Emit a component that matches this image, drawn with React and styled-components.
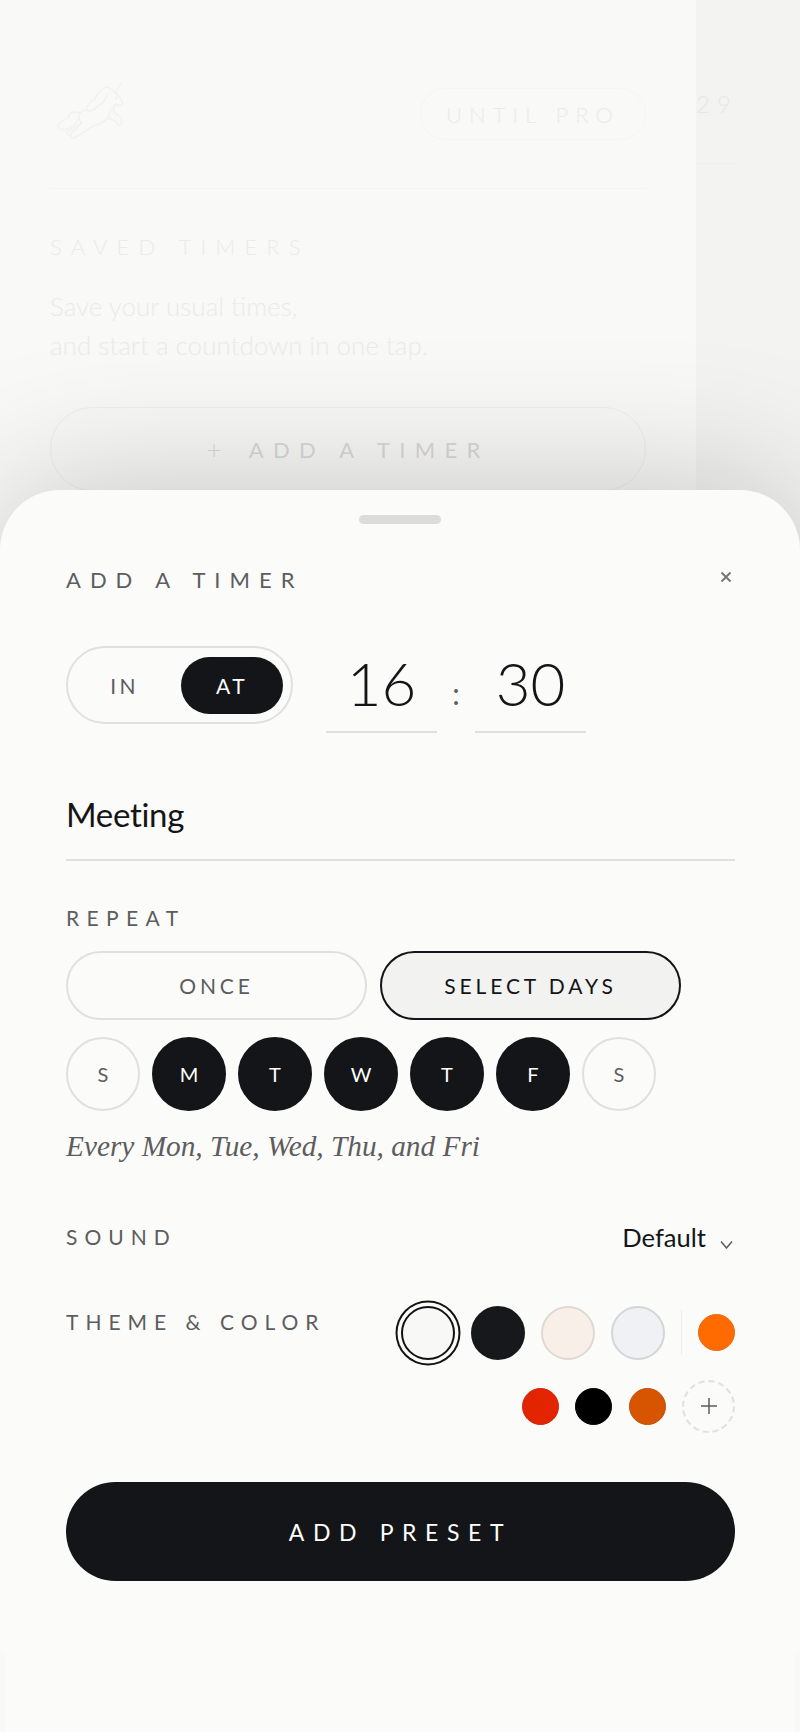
import React from "react";
import styled, { createGlobalStyle } from "styled-components";

const INK = "#141518";
const LINE = "#e0e0de";
const MUTED = "#5d5d5f";
const SHEET = "#fbfbf9";
const GHOST = "#ebebe9";

const GlobalStyle = createGlobalStyle`
    html, body {
        margin: 0;
        padding: 0;
        background: ${SHEET};
    }
    * {
        box-sizing: border-box;
    }
`;

const Unicorn = () => (
    <svg width="72" height="60" viewBox="0 0 72 60" fill="none" stroke="#f0f0ee" strokeWidth="1.2" strokeLinejoin="round" strokeLinecap="round">
        {/* head and horn */}
        <path d="M66 3 L60.5 13 C63 15 66 19 68 23 C67 26 63 26 60 24 L58 29 C59 33 61 35 64 36 C66 38 67 42 66 45 C64 46 62 45 62 42 C59 40 56 39 53 38" />
        {/* mane */}
        <path d="M60.5 13 C58 10 55 8 52 7 C46 9 42 13 40 19 C36 21 32 25 31 30 C35 32 39 30 42 27 C47 24 51 19 53 14" />
        {/* body and hind legs */}
        <path d="M31 30 C27 30 24 33 24 37 C24 40 25 42 27 43 C24 46 20 50 16 53 C15 56 17 58 19 58 C26 54 33 50 38 46 C44 45 49 42 53 38 L56 29" />
        <path d="M27 43 C22 45 17 48 12 52 C11 54 13 56 16 55" />
        {/* tail */}
        <path d="M24 33 C18 30 14 33 13 38 C8 39 4 43 3 47 C6 51 12 50 16 47 C19 45 22 42 24 38" />
        <circle cx="61" cy="18" r="0.7" />
    </svg>
);

const App = () => {
    return (
        <>
            <GlobalStyle />
            <Screen>
                <MainPanel>
                    <TopBar>
                        <Unicorn />
                        <ProPill>UNTIL PRO</ProPill>
                    </TopBar>
                    <Rule />
                    <SavedTitle>SAVED TIMERS</SavedTitle>
                    <SavedText>Save your usual times,<br />and start a countdown in one tap.</SavedText>
                    <AddTimer><span>+</span> ADD A TIMER</AddTimer>
                </MainPanel>
                <SidePanel>
                    <SideNumber>29</SideNumber>
                    <SideRule />
                </SidePanel>

                <Sheet>
                    <Handle />
                    <Header>
                        <Title>ADD A TIMER</Title>
                        <svg width="12" height="12" viewBox="0 0 12 12" stroke="#77777a" strokeWidth="2">
                            <path d="M1.5 1.5 L10.5 10.5 M10.5 1.5 L1.5 10.5" />
                        </svg>
                    </Header>

                    <TimeRow>
                        <Toggle>
                            <ToggleOption>IN</ToggleOption>
                            <ToggleOption $active>AT</ToggleOption>
                        </Toggle>
                        <TimeField>16</TimeField>
                        <Colon>:</Colon>
                        <TimeField>30</TimeField>
                    </TimeRow>

                    <NameField>Meeting</NameField>

                    <RepeatLabel>REPEAT</RepeatLabel>
                    <Segments>
                        <Segment>ONCE</Segment>
                        <Segment $active>SELECT DAYS</Segment>
                    </Segments>
                    <Days>
                        <Day>S</Day>
                        <Day $active>M</Day>
                        <Day $active>T</Day>
                        <Day $active>W</Day>
                        <Day $active>T</Day>
                        <Day $active>F</Day>
                        <Day>S</Day>
                    </Days>
                    <Summary>Every Mon, Tue, Wed, Thu, and Fri</Summary>

                    <SoundRow>
                        <Label>SOUND</Label>
                        <SoundValue>
                            Default
                            <svg width="13" height="9" viewBox="0 0 13 9" fill="none" stroke="#5d5d5f" strokeWidth="1.5">
                                <path d="M1 1.5 L6.5 8 L12 1.5" />
                            </svg>
                        </SoundValue>
                    </SoundRow>

                    <ThemeRow>
                        <ThemeLabel>THEME &amp; COLOR</ThemeLabel>
                        <Palette>
                            <SwatchRow $height={65} $gap={16}>
                                <Swatch $fill="#f8f8f7" $edge="#111214" $selected />
                                <Swatch $fill="#17181b" $edge="#17181b" />
                                <Swatch $fill="#f8efe8" $edge="#e0d8d2" />
                                <Swatch $fill="#f0f1f4" $edge="#d4d5d8" />
                                <PaletteDivider />
                                <Accent $fill="#ff6b00" $edge="#ea6a0c" />
                            </SwatchRow>
                            <SwatchRow $height={52} $gap={16.5}>
                                <Accent $fill="#e32400" $edge="#d0280a" />
                                <Accent $fill="#000000" $edge="#000000" />
                                <Accent $fill="#d75500" $edge="#c3500a" />
                                <AddColor>
                                    <svg width="18" height="18" viewBox="0 0 18 18" stroke="#5d5d5f" strokeWidth="1.5">
                                        <path d="M9 1 V17 M1 9 H17" />
                                    </svg>
                                </AddColor>
                            </SwatchRow>
                        </Palette>
                    </ThemeRow>

                    <PrimaryButton>ADD PRESET</PrimaryButton>
                </Sheet>
            </Screen>
        </>
    );
};

const Screen = styled.div`
    position: relative;
    display: flex;
    width: 800px;
    height: 1732px;
    overflow: hidden;
    font-family: "Lato", "Liberation Sans", sans-serif;
    color: ${INK};
`;

const MainPanel = styled.div`
    width: 696px;
    padding: 80px 50px 0;
    background: #f9f9f7;
    color: ${GHOST};
`;

const TopBar = styled.div`
    display: flex;
    justify-content: space-between;
    align-items: flex-end;
    height: 60px;
    padding-left: 5px;
`;

const ProPill = styled.div`
    width: 226px;
    height: 52px;
    border: 1px solid #f5f5f3;
    border-radius: 26px;
    display: flex;
    align-items: center;
    justify-content: center;
    font-size: 22px;
    font-weight: 300;
    letter-spacing: 7px;
`;

const Rule = styled.div`
    height: 1px;
    margin-top: 48px;
    background: #f4f4f2;
`;

const SavedTitle = styled.div`
    margin-top: 45px;
    font-size: 22px;
    font-weight: 300;
    letter-spacing: 9.1px;
    line-height: 26px;
`;

const SavedText = styled.div`
    margin-top: 27px;
    font-size: 26px;
    font-weight: 300;
    line-height: 39px;
`;

const AddTimer = styled.div`
    margin-top: 42px;
    height: 84px;
    border: 1px solid #efefed;
    border-radius: 45px;
    display: flex;
    align-items: center;
    justify-content: center;
    font-size: 22px;
    letter-spacing: 9.3px;
    color: #d9d9d7;
    span {
        font-size: 26px;
        font-weight: 300;
        margin-right: 18px;
    }
`;

const SidePanel = styled.div`
    flex: 1;
    background: #f3f3f2;
    color: #e7e7e5;
`;

const SideNumber = styled.div`
    margin-top: 92px;
    font-size: 24px;
    font-weight: 300;
    letter-spacing: 7px;
    line-height: 24px;
`;

const SideRule = styled.div`
    width: 40px;
    height: 1px;
    margin-top: 47px;
    background: #efefee;
`;

const Sheet = styled.div`
    position: absolute;
    top: 490px;
    left: 0;
    right: 0;
    bottom: 0;
    padding: 25px 65px 0 66px;
    background: ${SHEET};
    border-radius: 60px 60px 0 0;
    box-shadow: 0 0 150px rgba(0, 0, 0, 0.22);
    &::after {
        content: "";
        position: absolute;
        top: 1160px;
        left: 0;
        right: 0;
        bottom: 0;
        border-left: 5px solid #f9f9f7;
        border-right: 5px solid #f9f9f7;
    }
`;

const Handle = styled.div`
    width: 82px;
    height: 9px;
    margin-left: 293px;
    border-radius: 5px;
    background: #dcdcdb;
`;

const Header = styled.div`
    display: flex;
    justify-content: space-between;
    align-items: center;
    height: 30px;
    margin-top: 40px;
    padding-right: 3px;
    svg {
        margin-top: -4px;
    }
`;

const Title = styled.div`
    font-size: 22px;
    letter-spacing: 9px;
    color: ${MUTED};
`;

const TimeRow = styled.div`
    display: flex;
    align-items: flex-start;
    margin-top: 52px;
`;

const Toggle = styled.div`
    display: flex;
    align-items: center;
    width: 227px;
    height: 78px;
    padding-right: 8px;
    margin-right: 33px;
    border: 2px solid ${LINE};
    border-radius: 39px;
`;

const ToggleOption = styled.div`
    display: flex;
    align-items: center;
    justify-content: center;
    flex: ${p => (p.$active ? "0 0 102px" : "1")};
    height: 57px;
    border-radius: 29px;
    font-size: 21px;
    letter-spacing: 3.4px;
    background: ${p => (p.$active ? INK : "transparent")};
    color: ${p => (p.$active ? "#fff" : MUTED)};
`;

const TimeField = styled.div`
    width: 111px;
    height: 87px;
    border-bottom: 2px solid ${LINE};
    text-align: center;
    font-size: 60px;
    font-weight: 300;
    line-height: 74px;
`;

const Colon = styled.div`
    width: 38px;
    text-align: center;
    font-size: 30px;
    line-height: 30px;
    padding-top: 32px;
    color: ${MUTED};
`;

const NameField = styled.div`
    height: 128px;
    padding-top: 57px;
    border-bottom: 2px solid ${LINE};
    font-size: 33px;
    line-height: 48px;
    letter-spacing: -0.3px;
`;

const Label = styled.div`
    font-size: 21px;
    letter-spacing: 7px;
    line-height: 24px;
    color: ${MUTED};
`;

const RepeatLabel = styled(Label)`
    margin-top: 45px;
    letter-spacing: 7.4px;
`;

const Segments = styled.div`
    display: flex;
    gap: 13px;
    margin-top: 21px;
`;

const Segment = styled.div`
    display: flex;
    align-items: center;
    justify-content: center;
    width: 301px;
    height: 69px;
    border: 2px solid ${p => (p.$active ? INK : LINE)};
    border-radius: 35px;
    font-size: 21px;
    letter-spacing: 3.9px;
    background: ${p => (p.$active ? "#f2f2f1" : "transparent")};
    color: ${p => (p.$active ? INK : MUTED)};
`;

const Days = styled.div`
    display: flex;
    gap: 12px;
    margin-top: 17px;
`;

const Day = styled.div`
    display: flex;
    align-items: center;
    justify-content: center;
    width: 74px;
    height: 74px;
    border-radius: 50%;
    border: 2px solid ${p => (p.$active ? INK : LINE)};
    font-size: 20px;
    background: ${p => (p.$active ? INK : "transparent")};
    color: ${p => (p.$active ? "#fff" : MUTED)};
`;

const Summary = styled.div`
    margin-top: 17px;
    height: 36px;
    font-family: "Liberation Serif", serif;
    font-style: italic;
    font-size: 29.3px;
    line-height: 36px;
    color: ${MUTED};
`;

const SoundRow = styled.div`
    display: flex;
    justify-content: space-between;
    align-items: center;
    height: 34px;
    margin-top: 56px;
`;

const SoundValue = styled.div`
    display: flex;
    align-items: center;
    gap: 14px;
    font-size: 25.6px;
    line-height: 30px;
    svg {
        margin-top: 14px;
        margin-right: 2px;
    }
`;

const ThemeRow = styled.div`
    display: flex;
    justify-content: space-between;
    align-items: flex-start;
    margin-top: 46px;
`;

const ThemeLabel = styled(Label)`
    margin-top: 10px;
`;

const Palette = styled.div`
    display: flex;
    flex-direction: column;
    gap: 15px;
`;

const SwatchRow = styled.div`
    display: flex;
    justify-content: flex-end;
    align-items: center;
    gap: ${p => p.$gap}px;
    height: ${p => p.$height}px;
`;

const Swatch = styled.div`
    width: 54px;
    height: 54px;
    border-radius: 50%;
    background: ${p => p.$fill};
    border: 2px solid ${p => p.$edge};
    box-shadow: ${p => (p.$selected ? `0 0 0 3.5px ${SHEET}, 0 0 0 5.5px ${p.$edge}` : "none")};
`;

const Accent = styled.div`
    width: 37px;
    height: 37px;
    border-radius: 50%;
    background: ${p => p.$fill};
    border: 1px solid ${p => p.$edge};
`;

const PaletteDivider = styled.div`
    width: 1px;
    height: 45px;
    background: #ececea;
`;

const AddColor = styled.div`
    display: flex;
    align-items: center;
    justify-content: center;
    width: 53px;
    height: 53px;
    border-radius: 50%;
    border: 2px dashed ${LINE};
`;

const PrimaryButton = styled.div`
    display: flex;
    align-items: center;
    justify-content: center;
    height: 99px;
    margin-top: 50px;
    border-radius: 50px;
    background: ${INK};
    color: #fff;
    font-size: 23px;
    letter-spacing: 8.6px;
`;

export default App;
